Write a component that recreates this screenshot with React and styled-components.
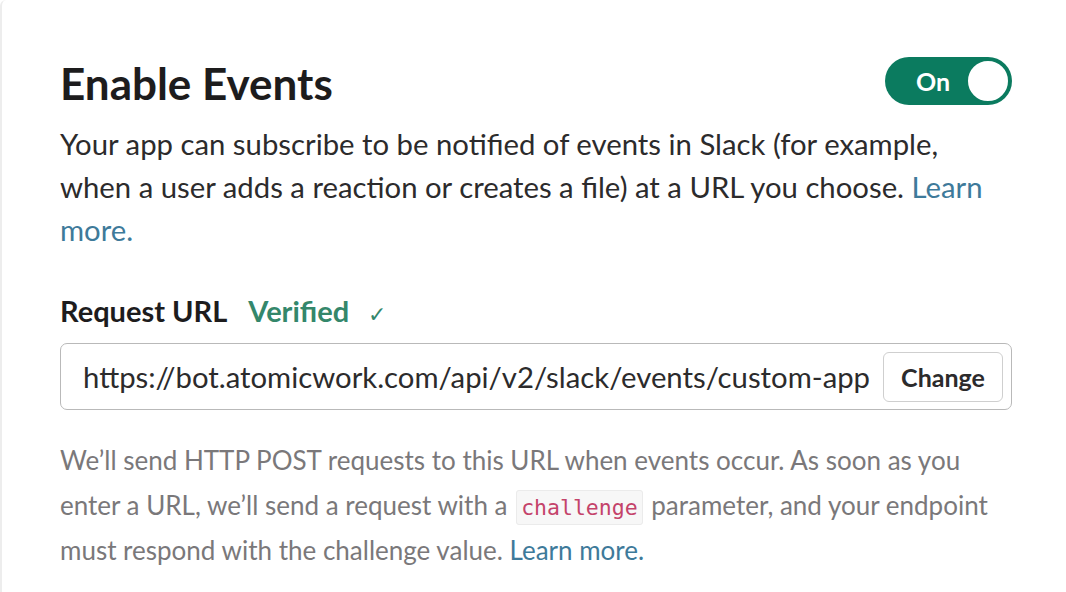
import React from "react";
import styled, { createGlobalStyle } from "styled-components";

const GlobalStyle = createGlobalStyle`
  html, body {
    margin: 0;
    padding: 0;
    background: #ffffff;
    font-family: Lato, "Noto Sans", sans-serif;
  }
`;

const App = () => {
  return (
    <>
      <GlobalStyle />
      <Panel>
        <Section>
          <TitleRow>
            <Title>Enable Events</Title>
            <Toggle>
              <ToggleLabel>On</ToggleLabel>
              <Knob />
            </Toggle>
          </TitleRow>
          <Lead>
            Your app can subscribe to be notified of events in Slack (for example,
            when a user adds a reaction or creates a file) at a URL you choose.{" "}
            <Link>Learn more.</Link>
          </Lead>

          <FieldLabel>
            Request URL
            <Verified>
              Verified <Check>✓</Check>
            </Verified>
          </FieldLabel>
          <UrlBox>
            <UrlText>https://bot.atomicwork.com/api/v2/slack/events/custom-app</UrlText>
            <ChangeButton>Change</ChangeButton>
          </UrlBox>

          <Hint>
            We’ll send HTTP POST requests to this URL when events occur. As soon as you
            enter a URL, we’ll send a request with a <Code>challenge</Code> parameter, and
            your endpoint must respond with the challenge value. <Link>Learn more.</Link>
          </Hint>
        </Section>
      </Panel>
    </>
  );
};

const Panel = styled.div`
  height: 592px;
  box-sizing: border-box;
  border-left: 2px solid #ededed;
  border-top-left-radius: 6px;
  padding: 57px 0 0 58px;
`;

const Section = styled.div`
  width: 952px;
  display: flex;
  flex-direction: column;
`;

const TitleRow = styled.div`
  display: flex;
  align-items: center;
  justify-content: space-between;
  height: 48px;
`;

const Title = styled.h2`
  margin: 4px 0 0;
  font-size: 44px;
  font-weight: 700;
  color: #1d1c1d;
  line-height: 48px;
`;

const Toggle = styled.div`
  width: 127px;
  height: 48px;
  box-sizing: border-box;
  border-radius: 24px;
  background: #0b7b5f;
  display: flex;
  align-items: center;
  justify-content: space-between;
  padding: 0 2px 0 31px;
`;

const ToggleLabel = styled.span`
  color: #ffffff;
  font-size: 25px;
  font-weight: 700;
`;

const Knob = styled.span`
  width: 44px;
  height: 44px;
  box-sizing: border-box;
  border-radius: 50%;
  background: #ffffff;
  border: 2px solid #0b7b5f;
`;

const Lead = styled.p`
  margin: 17px 0 0;
  font-size: 29.3px;
  line-height: 43px;
  color: #2c2b2c;
`;

const Link = styled.a`
  color: #3e7a9a;
  text-decoration: none;
`;

const FieldLabel = styled.div`
  margin-top: 44px;
  display: flex;
  align-items: baseline;
  font-size: 29px;
  font-weight: 700;
  color: #1d1c1d;
  line-height: 32px;
`;

const Verified = styled.span`
  margin-left: 21px;
  color: #34876b;
  font-weight: 700;
`;

const Check = styled.span`
  margin-left: 12px;
  font-size: 22px;
  font-weight: 400;
`;

const UrlBox = styled.div`
  margin-top: 13px;
  height: 67px;
  box-sizing: border-box;
  border: 1.5px solid #b9b9b9;
  border-radius: 7px;
  display: flex;
  align-items: center;
  justify-content: space-between;
  padding: 0 8px 0 22px;
`;

const UrlText = styled.span`
  font-size: 29.3px;
  color: #2c2b2c;
  white-space: nowrap;
`;

const ChangeButton = styled.button`
  height: 50px;
  width: 120px;
  flex-shrink: 0;
  box-sizing: border-box;
  border: 1px solid #cfcfcf;
  border-radius: 6px;
  background: #ffffff;
  font-family: Lato, "Noto Sans", sans-serif;
  font-size: 25px;
  font-weight: 700;
  color: #2c2b2c;
  padding: 0;
`;

const Hint = styled.p`
  margin: 28px 0 0;
  font-size: 26px;
  line-height: 45px;
  color: #7a787a;
`;

const Code = styled.code`
  font-family: "DejaVu Sans Mono", "Liberation Mono", monospace;
  font-size: 21.5px;
  line-height: 1;
  color: #c4436a;
  background: #f7f7f7;
  border: 1px solid #ebebeb;
  border-radius: 3px;
  padding: 4px 4px;
  margin: 0 2px;
`;

export default App;
